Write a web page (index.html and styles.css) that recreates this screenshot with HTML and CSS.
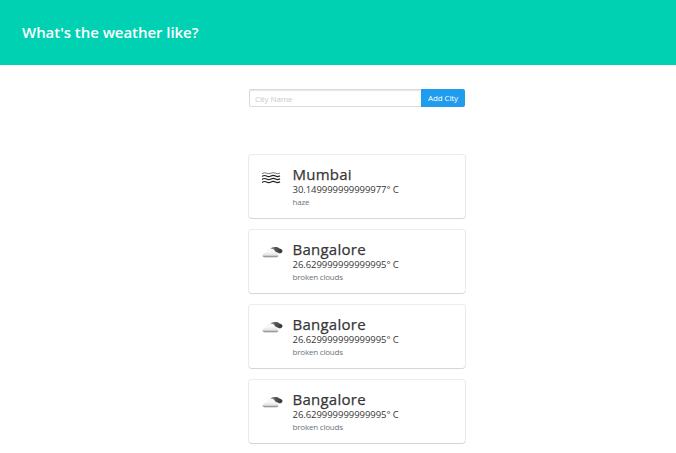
FILE: index.html
```html
<!DOCTYPE html>
<html lang="en">
<head>
<meta charset="utf-8">
<title>Weather</title>
<link rel="stylesheet" href="styles.css">
</head>
<body>
<svg width="0" height="0" class="defs" aria-hidden="true">
  <defs>
    <linearGradient id="light" x1="0" y1="0" x2="0" y2="1"><stop offset=".35" stop-color="#f8f8f8"/><stop offset=".75" stop-color="#e4e4e4"/><stop offset="1" stop-color="#777"/></linearGradient>
    <linearGradient id="dark" x1="0" y1="0" x2="1" y2="0"><stop offset="0" stop-color="#aaa"/><stop offset=".45" stop-color="#555"/><stop offset="1" stop-color="#333"/></linearGradient>
    <symbol id="clouds" viewBox="0 0 22 14">
      <path d="M8 3Q10 .6 13 1Q16 .8 17 2.300Q20 2.800 20.600 4.800Q20.600 7.200 18 7.400L14 6Z" fill="url(#dark)"/>
      <path d="M2 11.200Q-.2 10.500 .7 8.500Q1.500 7 4 6.500Q5 2.800 9 2.700Q12.500 2.800 13.500 6Q16.500 7 16.500 9Q16.500 10.700 14.800 11.200Z" fill="url(#light)"/>
    </symbol>
    <symbol id="haze" viewBox="0 0 22 14">
      <g fill="none" stroke="#222" stroke-width="1.2">
        <path stroke="#777" stroke-width="1" d="M0 2.700Q2.200 1 4.500 2.200T9 2.200T13.500 2.200T18 2"/>
        <path d="M0 5.500Q2.200 3.800 4.500 5T9 5T13.500 5T18 4.800"/>
        <path d="M0 8.500Q2.200 6.800 4.500 8T9 8T13.500 8T18 7.800"/>
        <path d="M0 11.500Q2.200 9.800 4.500 11T9 11T13.500 11T18 10.800"/>
      </g>
    </symbol>
  </defs>
</svg>
<header class="hero"><h1 class="title">What's the weather like?</h1></header>
<main class="content">
  <form class="search">
    <input class="field" type="text" placeholder="City Name">
    <button class="add" type="button">Add City</button>
  </form>
  <section class="cards">
    <article class="card">
      <svg class="icon"><use href="#haze"/></svg>
      <div><h2 class="city">Mumbai</h2><p class="temp">30.149999999999977° C</p><p class="desc">haze</p></div>
    </article>
    <article class="card">
      <svg class="icon"><use href="#clouds"/></svg>
      <div><h2 class="city">Bangalore</h2><p class="temp">26.629999999999995° C</p><p class="desc">broken clouds</p></div>
    </article>
    <article class="card">
      <svg class="icon"><use href="#clouds"/></svg>
      <div><h2 class="city">Bangalore</h2><p class="temp">26.629999999999995° C</p><p class="desc">broken clouds</p></div>
    </article>
    <article class="card">
      <svg class="icon"><use href="#clouds"/></svg>
      <div><h2 class="city">Bangalore</h2><p class="temp">26.629999999999995° C</p><p class="desc">broken clouds</p></div>
    </article>
  </section>
</main>
</body>
</html>
```
FILE: styles.css
```css
* { box-sizing: border-box; margin: 0; padding: 0; }
body { min-height: 100vh; background: #fff; font-family: "Open Sans", "Noto Sans", sans-serif; color: #363636; }
.defs { display: block; height: 0; }
.hero { height: 65px; padding: 22px; background: #00d1b2; }
.title { font-size: 15px; line-height: 21px; font-weight: 600; letter-spacing: -.05px; color: #fff; white-space: nowrap; }
.content { width: 216px; margin: 24px 0 0 249px; }
.search { display: flex; height: 18px; }
.field {
  flex: 1; min-width: 0; padding: 1px 5px 0;
  border: 1px solid #dbdbdb; border-right: 0; border-radius: 2px 0 0 2px;
  box-shadow: inset 0 1px 1px rgba(10, 10, 10, .1);
  font: 8px "Open Sans", sans-serif; letter-spacing: -.1px; outline: 0;
}
.field::placeholder { color: #c9c9c9; opacity: 1; }
.add {
  width: 44px; border: 0; border-radius: 0 2px 2px 0;
  background: #209cee; color: #fff; font: 8px/18px "Open Sans", sans-serif; letter-spacing: -.1px; white-space: nowrap;
}
.cards { display: grid; gap: 12px; margin-top: 48px; }
.card {
  display: flex; height: 63px; padding: 11px 13px; border-radius: 3px;
  box-shadow: 0 1px 1px rgba(10, 10, 10, .1), 0 0 0 1px rgba(10, 10, 10, .08);
}
.icon { width: 22px; height: 14px; margin: 5px 8.500px 0 0; flex: none; }
.city { font-size: 15px; line-height: 17px; font-weight: 500; letter-spacing: .25px; -webkit-text-stroke: .25px #363636; white-space: nowrap; }
.temp { font-size: 9.500px; line-height: 13px; letter-spacing: -.05px; white-space: nowrap; }
.desc { font-size: 8px; line-height: 12px; letter-spacing: -.2px; color: #69747c; }
```
